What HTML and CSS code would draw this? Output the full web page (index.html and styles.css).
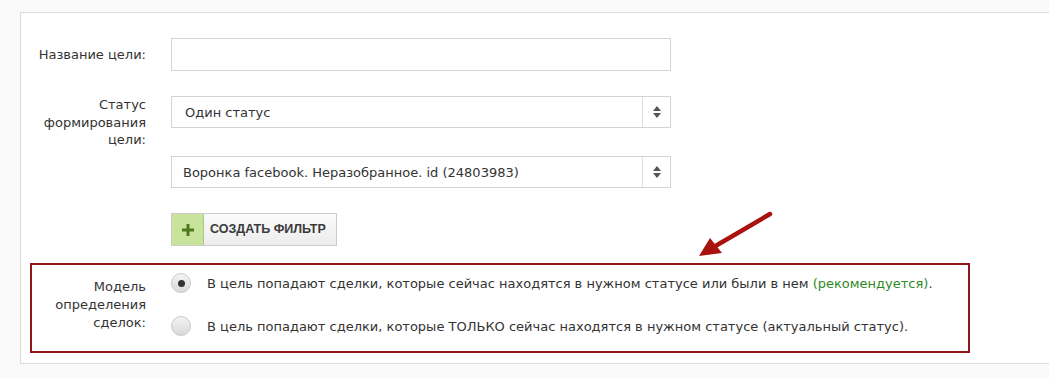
FILE: index.html
```html
<!DOCTYPE html>
<html lang="ru">
<head>
    <meta charset="UTF-8">
    <meta name="viewport" content="width=device-width, initial-scale=1.0">
    <title>Цель</title>
    <link rel="stylesheet" href="styles.css">
</head>
<body>
    <div class="panel">
        <div class="row row-single">
            <label class="label">Название цели:</label>
            <div class="fields">
                <input type="text" class="input">
            </div>
        </div>

        <div class="row row-last">
            <label class="label">Статус формирования цели:</label>
            <div class="fields">
                <div class="select">
                    <span class="select-text">Один статус</span>
                    <span class="select-arrows"><i class="up"></i><i class="down"></i></span>
                </div>
                <div class="select select-second">
                    <span class="select-text">Воронка facebook. Неразобранное. id (24803983)</span>
                    <span class="select-arrows"><i class="up"></i><i class="down"></i></span>
                </div>
                <button class="filter-button">
                    <span class="filter-plus">
                        <svg width="12" height="12" viewBox="0 0 12 12"><path d="M4.5 0h3v4.5H12v3H7.5V12h-3V7.5H0v-3h4.5z" fill="#4d7a1c"/></svg>
                    </span>
                    <span class="filter-text">Создать фильтр</span>
                </button>
            </div>
        </div>

        <div class="model-box">
            <label class="label model-label">Модель определения сделок:</label>
            <div class="options">
                <div class="option">
                    <span class="radio checked"></span>
                    <span>В цель попадают сделки, которые сейчас находятся в нужном статусе или были в нем <span class="recommended">(рекомендуется)</span>.</span>
                </div>
                <div class="option">
                    <span class="radio"></span>
                    <span>В цель попадают сделки, которые ТОЛЬКО сейчас находятся в нужном статусе (актуальный статус).</span>
                </div>
            </div>
        </div>
    </div>

    <!-- annotation arrow -->
    <svg class="pointer" width="1049" height="378" viewBox="0 0 1049 378">
        <line x1="770" y1="214" x2="712" y2="248" stroke="#a8120f" stroke-width="4.5" stroke-linecap="round"/>
        <polygon points="699,256 710,238 722,253" fill="#a8120f"/>
    </svg>
</body>
</html>
```

FILE: styles.css
```css
body {
    margin: 0;
    padding: 0;
    background-color: #f9f9f9;
    font-family: "DejaVu Sans", Verdana, sans-serif;
    font-size: 13px;
    color: #333;
    position: relative;
    height: 378px;
    overflow: hidden;
}

.panel {
    margin: 12px 0 0 20px;
    background-color: #fff;
    border: 1px solid #ddd;
    border-right: none;
    padding: 25px 0 10px 0;
}

.row {
    display: grid;
    grid-template-columns: 125px 500px;
    column-gap: 25px;
    align-items: start;
    margin-bottom: 25px;
}

.row-last {
    margin-bottom: 17px;
}

.label {
    text-align: right;
    line-height: 17.5px;
}

.row-single .label {
    padding-top: 8px;
}

.fields {
    display: flex;
    flex-direction: column;
}

.input {
    box-sizing: border-box;
    width: 500px;
    height: 33px;
    border: 1px solid #d4d4d4;
    margin: 0;
}

.select {
    box-sizing: border-box;
    height: 32px;
    border: 1px solid #d4d4d4;
    display: flex;
    align-items: center;
    background-color: #fff;
}

.select-text {
    flex: 1;
    padding-left: 13px;
}

.select-second {
    margin-top: 28px;
}

.select-second .select-text {
    padding-left: 11px;
}

.select-arrows {
    width: 27px;
    height: 100%;
    border-left: 1px solid #ddd;
    display: flex;
    flex-direction: column;
    align-items: center;
    justify-content: center;
    gap: 2px;
}

.select-arrows i {
    width: 0;
    height: 0;
    border-left: 4px solid transparent;
    border-right: 4px solid transparent;
}

.select-arrows .up {
    border-bottom: 5px solid #555;
}

.select-arrows .down {
    border-top: 5px solid #555;
}

.filter-button {
    margin-top: 25px;
    align-self: flex-start;
    display: flex;
    height: 33px;
    padding: 0;
    border: 1px solid #ccc;
    background: linear-gradient(#fbfbfb, #ececec);
    cursor: pointer;
}

.filter-plus {
    width: 31px;
    height: 31px;
    background-color: #c8e39c;
    border-right: 1px solid #a9c97c;
    display: flex;
    align-items: center;
    justify-content: center;
}

.filter-text {
    padding: 0 10px 0 6px;
    line-height: 31px;
    font-family: "Liberation Sans", Arial, sans-serif;
    font-weight: bold;
    font-size: 12.5px;
    text-transform: uppercase;
    color: #3a3a3a;
}

.model-box {
    margin-left: 9px;
    width: 936px;
    height: 86px;
    border: 2px solid #951616;
    display: grid;
    grid-template-columns: 114px 1fr;
    column-gap: 25px;
    align-items: start;
}

.model-label {
    margin-top: 13px;
    line-height: 18px;
}

.options {
    margin-top: 8px;
    display: flex;
    flex-direction: column;
    gap: 23px;
}

.option {
    display: flex;
    align-items: center;
    gap: 16px;
    height: 20px;
}

.radio {
    box-sizing: border-box;
    width: 20px;
    height: 20px;
    flex: none;
    border-radius: 50%;
    border: 1px solid #c9c9c9;
    background: linear-gradient(#f4f4f4, #d8d8d8);
    display: flex;
    align-items: center;
    justify-content: center;
}

.radio.checked::after {
    content: "";
    width: 7px;
    height: 7px;
    border-radius: 50%;
    background-color: #333;
}

.recommended {
    color: #2f8a22;
}

.pointer {
    position: absolute;
    left: 0;
    top: 0;
    pointer-events: none;
}
```
